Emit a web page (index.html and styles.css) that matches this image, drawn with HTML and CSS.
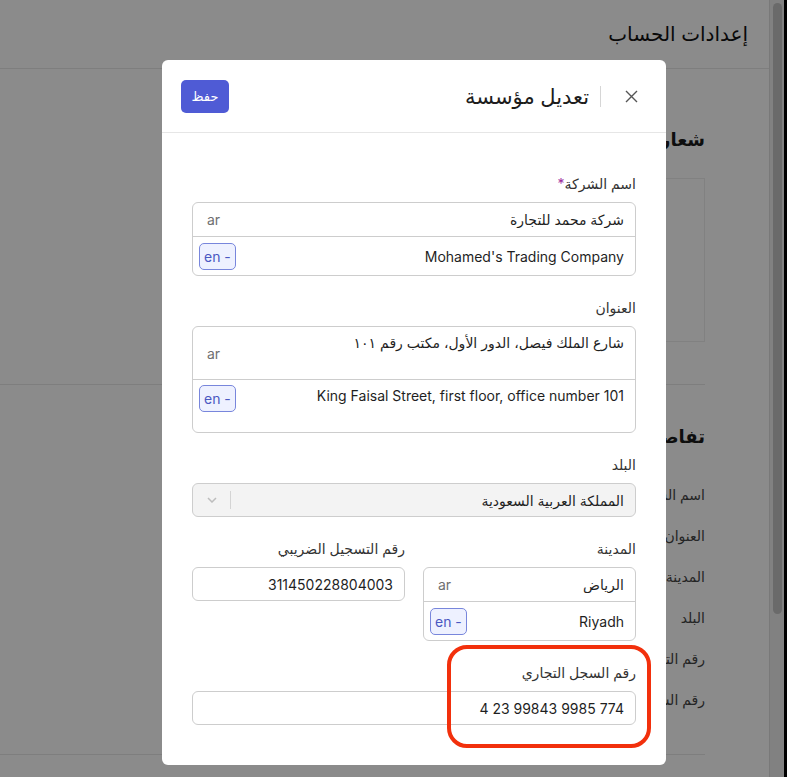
FILE: index.html
```html
<!DOCTYPE html>
<html lang="ar" dir="rtl">

<head>
    <meta charset="UTF-8">
    <title>إعدادات الحساب</title>
    <link rel="stylesheet" href="styles.css">
</head>

<body>
    <div class="page">
        <header class="page-head">
            <h1>إعدادات الحساب</h1>
        </header>

        <main class="page-body">
            <section class="block block-logo">
                <h2>شعار المؤسسة</h2>
                <div class="logo-box"></div>
            </section>

            <section class="block block-details">
                <h2>تفاصيل المؤسسة</h2>
                <ul class="details">
                    <li>اسم الشركة</li>
                    <li>العنوان</li>
                    <li>المدينة</li>
                    <li>البلد</li>
                    <li>رقم التسجيل الضريبي</li>
                    <li>رقم السجل التجاري</li>
                </ul>
            </section>
        </main>
    </div>

    <div class="scrollbar"><div class="thumb"></div></div>

    <div class="overlay">
        <div class="modal">
            <div class="modal-head">
                <button class="close-btn" aria-label="close">
                    <svg width="13" height="13" viewBox="0 0 13 13">
                        <path d="M1 1 L12 12 M12 1 L1 12" stroke="#555" stroke-width="1.4" fill="none" />
                    </svg>
                </button>
                <span class="head-sep"></span>
                <h3 class="modal-title">تعديل مؤسسة</h3>
                <button class="save-btn">حفظ</button>
            </div>

            <div class="modal-body">
                <div class="field">
                    <label>اسم الشركة<span class="req">*</span></label>
                    <div class="ml-box">
                        <div class="ml-row">
                            <input type="text" value="شركة محمد للتجارة">
                            <span class="lang">ar</span>
                        </div>
                        <div class="ml-row ml-row-en">
                            <input type="text" value="Mohamed's Trading Company">
                            <span class="badge">en -</span>
                        </div>
                    </div>
                </div>

                <div class="field">
                    <label>العنوان</label>
                    <div class="ml-box">
                        <div class="ml-row ml-area">
                            <textarea rows="2">شارع الملك فيصل، الدور الأول، مكتب رقم ١٠١</textarea>
                            <span class="lang">ar</span>
                        </div>
                        <div class="ml-row ml-area ml-area-en">
                            <textarea rows="2">King Faisal Street, first floor, office number 101</textarea>
                            <span class="badge">en -</span>
                        </div>
                    </div>
                </div>

                <div class="field">
                    <label>البلد</label>
                    <div class="select is-disabled">
                        <div class="select-value">المملكة العربية السعودية</div>
                        <div class="select-indicators">
                            <span class="select-sep"></span>
                            <svg width="10" height="6" viewBox="0 0 10 6">
                                <path d="M1 1 L5 5 L9 1" stroke="#bdbdbd" stroke-width="1.5" fill="none" />
                            </svg>
                        </div>
                    </div>
                </div>

                <div class="field two-col">
                    <div>
                        <label>المدينة</label>
                        <div class="ml-box">
                            <div class="ml-row">
                                <input type="text" value="الرياض">
                                <span class="lang">ar</span>
                            </div>
                            <div class="ml-row ml-row-en">
                                <input type="text" value="Riyadh">
                                <span class="badge">en -</span>
                            </div>
                        </div>
                    </div>
                    <div>
                        <label>رقم التسجيل الضريبي</label>
                        <input class="text-input" type="text" value="311450228804003">
                    </div>
                </div>

                <div class="field">
                    <label>رقم السجل التجاري</label>
                    <input class="text-input" type="text" value="774 9985 99843 23 4">
                </div>
            </div>

            <!-- highlight drawn on the screenshot -->
            <div class="annot"></div>
        </div>
    </div>
</body>

</html>
```

FILE: styles.css
```css
* {
    margin: 0;
    padding: 0;
    box-sizing: border-box;
}

html,
body {
    height: 100%;
}

body {
    font-family: Inter, "DejaVu Sans", sans-serif;
    font-size: 14px;
    color: #222;
    background: #fff;
    overflow: hidden;
}

/* page behind the dialog */
.page {
    margin-right: 18px;
}

.page-head {
    height: 69px;
    padding-right: 21px;
    display: flex;
    align-items: center;
    border-bottom: 1px solid #e8e8e8;
}

.page-head h1 {
    font-size: 20px;
    font-weight: normal;
    color: #111;
}

.page-body {
    padding-right: 64px;
}

.block {
    border-bottom: 1px solid #e8e8e8;
}

.block h2 {
    font-size: 18px;
    font-weight: 600;
    line-height: 24px;
    color: #1a1a1a;
}

.block-logo {
    padding: 59px 0 42px;
}

.logo-box {
    width: 210px;
    height: 164px;
    margin-top: 26px;
    background: #fff;
    border: 1px solid #ededed;
}

.block-details {
    padding: 40px 0 34px;
}

.details {
    list-style: none;
    margin-top: 25px;
}

.details li {
    height: 41px;
    display: flex;
    align-items: center;
    color: #444;
}

.scrollbar {
    position: fixed;
    top: 0;
    right: 0;
    width: 18px;
    height: 100%;
    background: #ededed;
    border-left: 1px solid #dedede;
    border-right: 3px solid #000;
}

.scrollbar .thumb {
    position: absolute;
    top: 3px;
    left: 3px;
    width: 9px;
    height: 611px;
    border-radius: 5px;
    background: #c3c3c3;
}

/* dialog */
.overlay {
    position: fixed;
    inset: 0;
    background: rgba(0, 0, 0, 0.455);
    padding-top: 60px;
}

.modal {
    position: relative;
    width: 504px;
    margin: 0 121px 0 auto;
    background: #fff;
    border-radius: 6px;
}

.modal-head {
    height: 73px;
    display: flex;
    align-items: center;
    padding: 0 28px 0 19px;
    border-bottom: 1px solid #e6e6e6;
}

.close-btn {
    border: 0;
    background: none;
    display: flex;
    cursor: pointer;
}

.head-sep {
    width: 1px;
    height: 21px;
    background: #d6d6d6;
    margin: 0 24px 0 11px;
}

.modal-title {
    font-size: 21px;
    font-weight: 500;
    color: #1c1c1c;
}

.save-btn {
    margin-right: auto;
    width: 48px;
    height: 33px;
    border: 0;
    border-radius: 5px;
    background: #4f5bd5;
    color: #fff;
    font-family: inherit;
    font-size: 13px;
    cursor: pointer;
}

.modal-body {
    padding: 41px 30px 40px 30px;
}

.field {
    margin-bottom: 22px;
}

.field:last-child {
    margin-bottom: 0;
}

.field label {
    display: block;
    line-height: 20px;
    margin-bottom: 8px;
    color: #333;
}

.req {
    color: #9c2c9c;
}

.ml-box {
    border: 1px solid #cdcdcd;
    border-radius: 6px;
}

.ml-row {
    height: 33px;
    display: flex;
    align-items: center;
    padding: 0 11px 0 6px;
}

.ml-row + .ml-row {
    border-top: 1px solid #cdcdcd;
}

.ml-row-en {
    height: 39px;
}

.ml-row input,
.ml-row textarea,
.text-input {
    font: inherit;
    color: #1f1f1f;
    border: 0;
    outline: 0;
    background: transparent;
    text-align: right;
}

.ml-row input,
.ml-row textarea {
    flex: 1;
    min-width: 0;
}

.ml-area {
    height: 52px;
    align-items: center;
}

.ml-area textarea {
    align-self: stretch;
    resize: none;
    overflow: hidden;
    line-height: 20px;
    padding-top: 6px;
}

.ml-area-en {
    height: 53px;
    align-items: flex-start;
}

.ml-area-en textarea {
    padding-top: 6px;
}

.ml-area-en .badge {
    margin-top: 5px;
}

.lang {
    padding: 0 8px;
    color: #6f6f6f;
}

.badge {
    direction: ltr;
    unicode-bidi: isolate;
    height: 27px;
    padding: 0 4px;
    display: flex;
    align-items: center;
    border: 1px solid #7886dc;
    border-radius: 5px;
    background: #eef1ff;
    color: #4a58c2;
}

.select {
    height: 34px;
    display: flex;
    align-items: center;
    border: 1px solid #cdcdcd;
    border-radius: 6px;
    padding-right: 11px;
}

.select.is-disabled {
    background: #f3f3f3;
}

.select-value {
    flex: 1;
    color: #1f1f1f;
}

.select-indicators {
    display: flex;
    align-items: center;
    gap: 13px;
    padding-left: 14px;
}

.select-sep {
    width: 1px;
    height: 18px;
    background: #d4d4d4;
}

.two-col {
    display: grid;
    grid-template-columns: repeat(2, minmax(0, 1fr));
    gap: 18px;
}

.text-input {
    display: block;
    width: 100%;
    height: 34px;
    padding: 0 11px;
    border: 1px solid #cdcdcd;
    border-radius: 6px;
}

.annot {
    position: absolute;
    left: 285px;
    top: 585px;
    width: 204px;
    height: 103px;
    border: 4px solid #f2300c;
    border-radius: 20px;
}
```
